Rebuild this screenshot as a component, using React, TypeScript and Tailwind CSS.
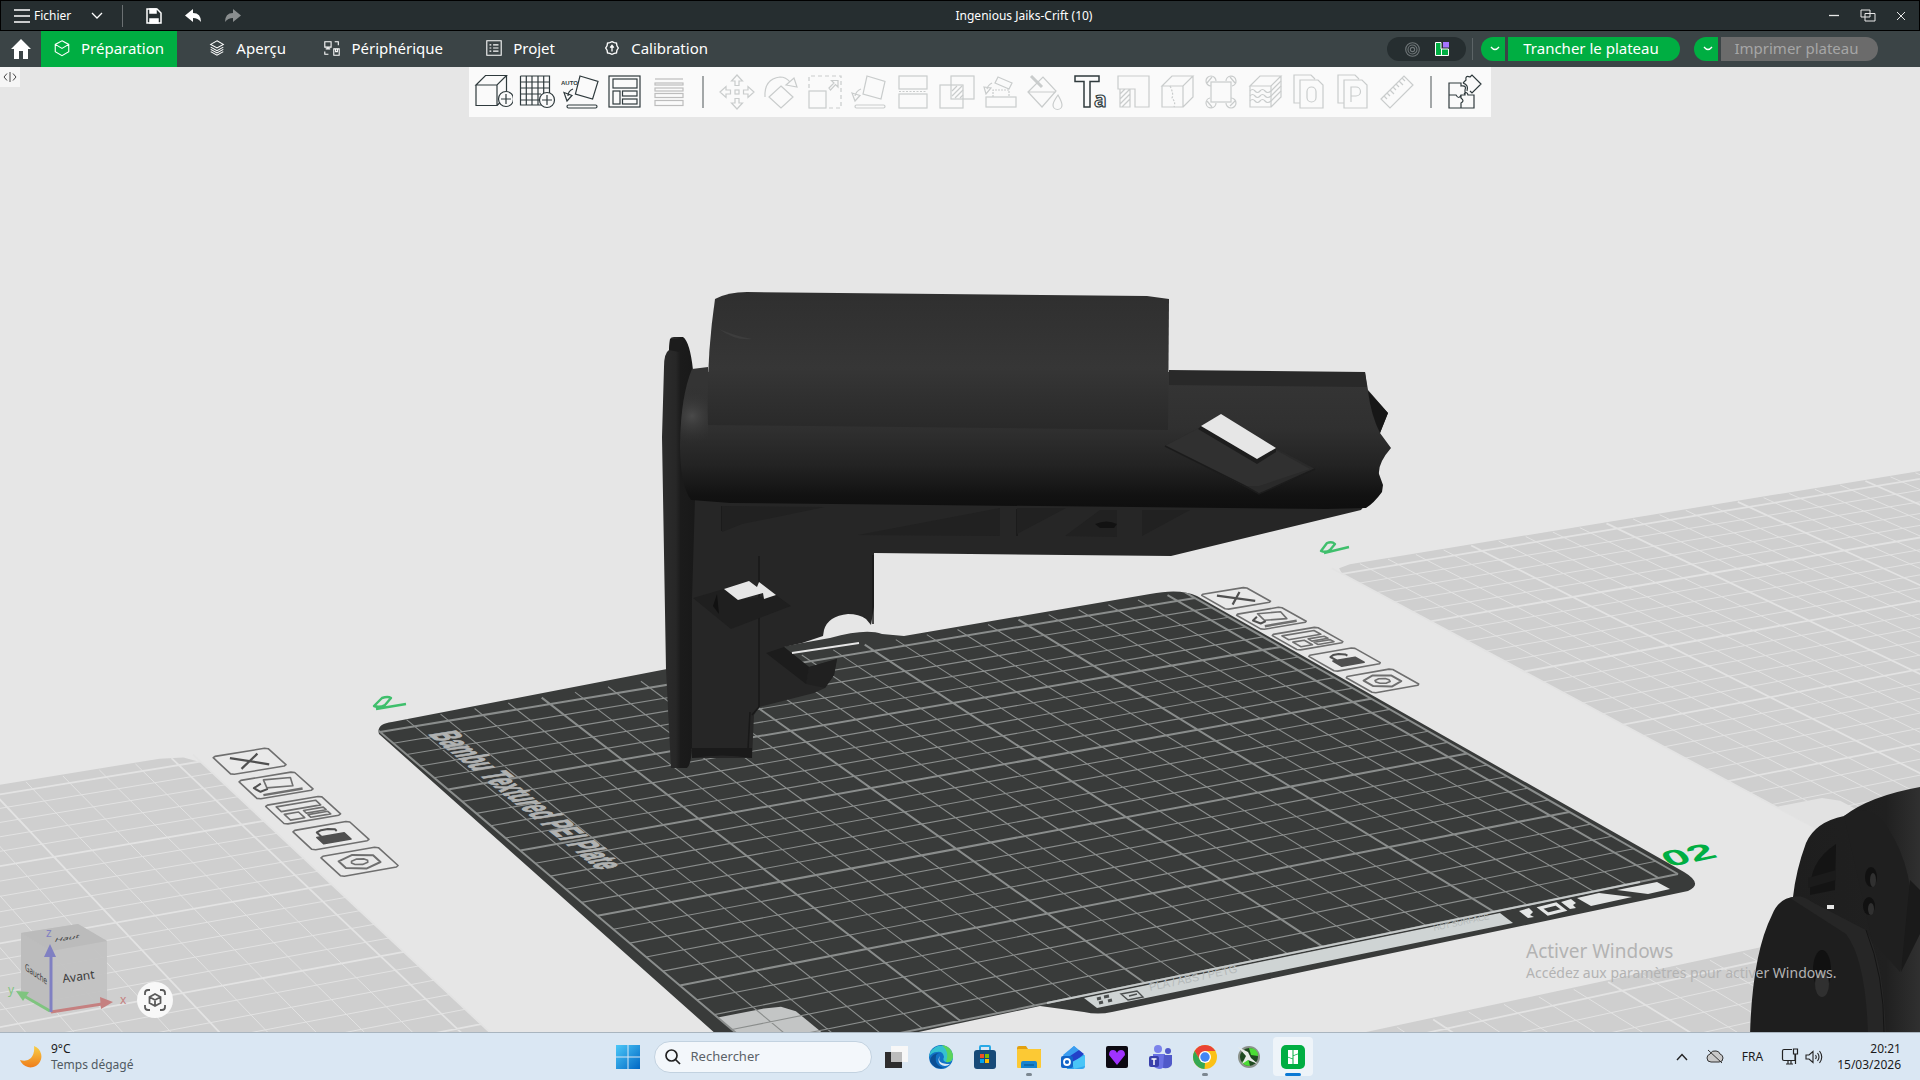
import React from "react";

type Pt = [number, number];

/* Projection of the build plane (millimetres) onto the viewport. */
function project(x: number, y: number): Pt {
  const u = x / 256;
  const v = y / 250;
  const w = 1 + 0.10236 * u + 0.17723 * v;
  return [(768 + 1081.8 * u - 320.7 * v) / w, (1060 - 96.5 * u - 198.3 * v) / w];
}
const pt = (p: Pt) => p[0].toFixed(1) + "," + p[1].toFixed(1);
const poly = (pts: Pt[]) => pts.map((p) => pt(project(p[0], p[1]))).join(" ");

function gridPath(x0: number, y0: number, bold: boolean) {
  let d = "";
  for (let i = 0; i <= 25; i++) {
    if ((i % 5 === 0) !== bold) continue;
    d += "M" + pt(project(x0 + i * 10, y0)) + "L" + pt(project(x0 + i * 10, y0 + 256));
    d += "M" + pt(project(x0, y0 + i * 10)) + "L" + pt(project(x0 + 256, y0 + i * 10));
  }
  if (bold) d += "M" + pt(project(x0 + 256, y0)) + "L" + pt(project(x0 + 256, y0 + 256));
  return d;
}

function GhostPlate({ x, y }: { x: number; y: number }) {
  return (
    <g>
      <polygon points={poly([[x, y], [x + 256, y], [x + 256, y + 249], [x + 253, y + 255], [x + 247, y + 257], [x + 7, y + 257], [x + 2, y + 255], [x, y + 250]])} fill="#cfcfcf" />
      <path d={gridPath(x, y, false)} stroke="#e2e2e2" strokeWidth="1" fill="none" />
      <path d={gridPath(x, y, true)} stroke="#e3e3e3" strokeWidth="1.8" fill="none" />
      <polygon points={poly([[x, y], [x + 18, y], [x + 18, y + 24], [x + 15, y + 28], [x, y + 28]])} fill="#e2e2e2" />
    </g>
  );
}

function PlateButtons({ x }: { x: number }) {
  const s = 15.5;
  const at = (i: number, pts: Pt[]) => poly(pts.map((p) => [x + (p[0] * s) / 10, 252 - i * 20.7 - (p[1] * s) / 10] as Pt));
  return (
    <g stroke="#6f6f6f" strokeWidth="1.6" fill="none" strokeLinejoin="round">
      {[0, 1, 2, 3, 4].map((i) => (
        <polygon key={i} points={at(i, [[0.5, 0], [9.5, 0], [10, 0.5], [10, 9.5], [9.5, 10], [0.5, 10], [0, 9.5], [0, 0.5]])} fill="#e9e9e9" />
      ))}
      <polyline points={at(0, [[2.5, 2], [7.5, 8]])} stroke="#505050" strokeWidth="2.2" />
      <polyline points={at(0, [[7.5, 2], [2.5, 8]])} stroke="#505050" strokeWidth="2.2" />
      <polygon points={at(1, [[4, 1.5], [8.5, 2.5], [7.5, 6.5], [3.2, 5.5]])} />
      <polyline points={at(1, [[3, 3], [1.2, 4.6], [1.6, 6.8], [3.2, 6]])} stroke="#505050" strokeWidth="2" />
      <polyline points={at(1, [[1.5, 8.5], [8.5, 8.5]])} strokeWidth="2.4" />
      <polygon points={at(2, [[1.5, 1.5], [8.5, 1.5], [8.5, 4], [1.5, 4]])} />
      <polygon points={at(2, [[1.5, 5.5], [4, 5.5], [4, 8.5], [1.5, 8.5]])} />
      <polygon points={at(2, [[5, 5.2], [8.5, 5.2], [8.5, 6.6], [5, 6.6]])} />
      <polygon points={at(2, [[5, 7.4], [8.5, 7.4], [8.5, 8.8], [5, 8.8]])} />
      <polygon points={at(3, [[2.6, 4.8], [7.4, 4.8], [7.4, 8], [2.6, 8]])} fill="#505050" stroke="#505050" />
      <polyline points={at(3, [[3.4, 4.8], [3.4, 2.6], [4.4, 1.9], [5.6, 1.9], [6.6, 2.6], [6.6, 3.4]])} stroke="#505050" strokeWidth="2" />
      <polygon points={at(4, [[5, 1.6], [8, 3.3], [8, 6.7], [5, 8.4], [2, 6.7], [2, 3.3]])} strokeWidth="2" />
      <polygon points={at(4, [[5, 3.7], [6.1, 4.2], [6.4, 5], [6.1, 5.9], [5, 6.4], [3.9, 5.9], [3.6, 5], [3.9, 4.2]])} strokeWidth="1.6" />
    </g>
  );
}

const plateOutline = "M379 734 Q376 724 392 722 L802 643 L830 638 Q866 628 882 634 L904 636 L1150 594 Q1180 588 1197 596 L1684 872 Q1704 884 1688 891 L1112 1012 Q1098 1015 1084 1012 L1040 1006 L900 1036 L860 1100 H790 Z";

function Scene() {
  return (
    <svg className="absolute inset-0 h-full w-full" viewBox="0 67 1920 965" preserveAspectRatio="xMidYMid slice" role="img" aria-label="Vue 3D du plateau">
      <defs>
        <clipPath id="plate"><path d={plateOutline} /></clipPath>
        <linearGradient id="top" x1="0" y1="292" x2="0" y2="430" gradientUnits="userSpaceOnUse">
          <stop offset="0" stopColor="#2f2f2f" /><stop offset="0.55" stopColor="#363636" /><stop offset="0.75" stopColor="#303030" /><stop offset="1" stopColor="#292929" />
        </linearGradient>
        <linearGradient id="tube" x1="0" y1="385" x2="0" y2="508" gradientUnits="userSpaceOnUse">
          <stop offset="0" stopColor="#343434" /><stop offset="0.35" stopColor="#303030" /><stop offset="0.65" stopColor="#232323" /><stop offset="0.9" stopColor="#121212" /><stop offset="1" stopColor="#0f0f0f" />
        </linearGradient>
        <radialGradient id="shine" cx="692" cy="416" r="28" gradientUnits="userSpaceOnUse">
          <stop offset="0" stopColor="#4a4a4a" /><stop offset="1" stopColor="#303030" stopOpacity="0" />
        </radialGradient>
        <linearGradient id="butt" x1="662" y1="0" x2="693" y2="0" gradientUnits="userSpaceOnUse">
          <stop offset="0" stopColor="#2c2c2c" /><stop offset="0.45" stopColor="#272727" /><stop offset="0.6" stopColor="#1b1b1b" /><stop offset="1" stopColor="#191919" />
        </linearGradient>
        <linearGradient id="right" x1="1750" y1="0" x2="1920" y2="0" gradientUnits="userSpaceOnUse">
          <stop offset="0" stopColor="#1d1d1d" /><stop offset="0.8" stopColor="#202020" /><stop offset="1" stopColor="#303030" />
        </linearGradient>
      </defs>
      <rect x="-400" y="-400" width="2800" height="1900" fill="#e6e6e6" />
      <GhostPlate x={-307} y={0} />
      <GhostPlate x={307} y={0} />
      <GhostPlate x={0} y={-307} />
      <GhostPlate x={307} y={-307} />

      {/* active plate */}
      <path d={plateOutline} fill="#393b3a" />
      <g clipPath="url(#plate)">
        <polygon points={poly([[0, 0], [18, 0], [18, 23], [16, 27], [12, 28], [0, 28]])} fill="#c3c5c5" />
        <path d={gridPath(0, 0, false)} stroke="#8a8d8c" strokeWidth="1.1" fill="none" />
        <path d={gridPath(0, 0, true)} stroke="#8a8d8c" strokeWidth="2" fill="none" />
      </g>
      <path d="M1047 1003 L1640 882" stroke="#c5c9c9" strokeWidth="2" />
      <path d="M1084 998 L1500 913 L1513 923 L1097 1008 Z" fill="#cfd4d4" />
      <g fill="none" stroke="#4b4e4e" strokeWidth="2">
        <path d="M1097 999 l4 -1 M1104 997 l5 -1 M1099 1003 l4 -1 M1108 1001 l4 -1" strokeWidth="3" />
        <path d="M1121 994 l16 -3 l6 6 l-15 3 z M1129 996 l8 -2" strokeWidth="1.4" />
      </g>
      <g fill="#b4b9b9" fontFamily="Liberation Sans, sans-serif">
        <text transform="translate(1150 991) rotate(-12)" fontSize="11">PLA / ABS / PETG</text>
        <text transform="translate(1434 931) rotate(-12)" fontSize="8">HOT SURFACE</text>
      </g>
      <g fill="#e4e6e6">
        <path d="M1519 911 l10 -3 l4 4 l-3 3 l4 2 l-6 1 z M1561 902 l10 -3 l5 4 l-3 2 l3 3 l-6 1 z" />
        <path d="M1540 908 L1556 904 L1564 910 L1548 914 Z" fill="none" stroke="#e4e6e6" strokeWidth="3" />
        <path d="M1577 898 L1599 893 L1632 897 L1591 906 Z M1617 890 L1657 882 L1670 889 L1648 894 Z" />
      </g>
      <text transform="matrix(1.38 1.1 -3.9 0.6 428 734)" fontFamily="Liberation Sans, sans-serif" fontSize="10" fontWeight="700" fill="#b0b2b2" stroke="#b0b2b2" strokeWidth="0.4">Bambu Textured PEI Plate</text>
      <PlateButtons x={259} />
      <PlateButtons x={-47} />
      <text transform="matrix(1.5 -0.3 0.55 0.68 1669 867)" fontFamily="Liberation Sans, sans-serif" fontSize="30" fontWeight="700" fill="#00ae42">02</text>
      <g fill="none" stroke="#3fbf6c" strokeWidth="2.4" strokeLinejoin="round">
        <path d="M376 709 L406 704 M374 706 L382 698 Q388 696 391 698 L385 705 Q380 708 374 706 Z" />
        <path d="M1324 553 L1349 547 M1321 551 L1327 543 Q1332 541 1335 544 L1330 550 Q1326 553 1321 551 Z" />
      </g>

      {/* stock model */}
      <path d="M691 495 L1365 505 L1361 510 L1171 556 L874 553 L874 607 L871 625 L866 619 Q859 614 848 614 Q828 616 824 630 L823 636 L802 643 L784 647 L809 667 L837 659 L834 675 L825 688 L814 693 L759 707 L754 715 L752 758 L692 758 Z" fill="#262626" />
      <path d="M809 667 L837 659 L834 675 L825 688 L806 684 Z" fill="#202020" />
      <path d="M766 653 L784 647 L809 667 L806 684 Z" fill="#1c1c1c" />
      <path d="M792 653 L859 643" stroke="#e6e6e6" strokeWidth="2" />
      <path d="M759 556 V707 L752 715 M692 749 H748 L750 712 M873 555 V624 M722 506 V531 M1017 509 V536" stroke="#191919" strokeWidth="1.5" fill="none" />
      <path d="M722 506 L825 507 L742 524 L722 532 Z M858 535 L1000 508 V536 Z M1017 508 H1066 L1017 534 Z M1065 536 L1100 510 H1117 V537 Z M1142 510 H1190 L1142 536 Z" fill="#212121" />
      <path d="M1095 524 q12 -5 22 0 l-3 4 h-14 z" fill="#121212" />
      <path d="M693 598 L724 589 L738 600 L776 595 L791 606 L731 629 Z" fill="#1f1f1f" />
      <path d="M724 589 L749 581 L757 587 L759 582 L776 595 L764 599 L763 593 L738 600 Z" fill="#e6e6e6" />
      <path d="M717 594 l2 20 l-6 -8 z" fill="#111" />
      <path d="M692 748 H752 V758 Q722 753 692 758 Z" fill="#1a1a1a" />
      <path d="M669 349 L670 339 Q671 337 674 337 H683 Q690 342 693 370 L695 500 L692 600 L692 748 Q691 765 687 768 L671 768 L666 670 L662 437 L664 367 Q664 353 669 350 Z" fill="url(#butt)" />
      <path d="M670 339 H684 L679 352 L669 350 Z" fill="#1c1c1c" />
      <path d="M692 369 L708 367 V372 L1365 372 L1368 390 L1388 413 L1380 433 L1391 448 Q1378 463 1379 474 L1383 485 L1382 492 Q1374 503 1366 508 L1327 509 L730 503 L691 500 Q680 485 680 445 Q681 395 692 369 Z" fill="url(#tube)" />
      <path d="M1169 370 L1365 372 L1367 387 L1169 385 Z" fill="#292929" />
      <path d="M1368 391 L1388 413 L1380 433 Q1371 415 1368 391 Z" fill="#171717" />
      <path d="M692 369 L708 367 V444 H680 Q681 395 692 369 Z" fill="url(#shine)" />
      <path d="M715 299 Q728 292 747 292 L1147 296 L1169 299 L1168 430 L708 425 Q706 360 715 299 Z" fill="url(#top)" />
      <path d="M719 329 Q735 341 752 339 Q735 336 719 329 Z" fill="#3d3d3d" />
      <path d="M1165 446 L1201 427 L1276 448 L1315 469 L1259 494 Z" fill="#2a2a2a" />
      <path d="M1165 446 L1201 427 L1257 461 L1276 450 L1310 469 L1259 486 L1245 486 Z" fill="#303030" />
      <path d="M1165 446 L1245 486 L1259 494 L1315 469" fill="none" stroke="#1c1c1c" strokeWidth="1.5" />
      <path d="M1201 426 L1257 459 L1276 448 L1276 452 L1257 464 L1198 429 Z" fill="#1d1d1d" />
      <path d="M1221 414 L1276 448 L1257 459 L1201 426 Z" fill="#e6e6e6" />

      {/* neighbouring model */}
      <path d="M1920 787 Q1870 796 1844 816 Q1815 822 1806 843 Q1796 870 1793 897 L1800 1040 H1920 Z" fill="url(#right)" />
      <path d="M1844 816 Q1872 800 1889 830 Q1915 870 1912 930 L1900 972 L1872 940 Z" fill="#1f1f1f" />
      <path d="M1910 880 L1920 890 V934 L1901 972 Z" fill="#1a1a1a" />
      <path d="M1836 844 Q1808 862 1810 895 L1835 890 Z" fill="#141414" />
      <path d="M1808 878 l28 -8 v10 l-28 8 z" fill="#1b1b1b" />
      <path d="M1750 1036 Q1752 955 1772 915 Q1780 895 1800 897 L1866 930 Q1884 960 1886 1036 Z" fill="#1e1e1e" />
      <path d="M1790 898 Q1800 893 1812 902 L1866 930 Q1884 960 1886 1036 H1868 Q1866 960 1846 934 Z" fill="#262626" />
      <rect x="1827" y="905" width="7" height="4" fill="#e6e6e6" />
      <g fill="#111">
        <ellipse cx="1871" cy="877" rx="6" ry="10" /><ellipse cx="1869" cy="906" rx="6" ry="9" /><ellipse cx="1822" cy="970" rx="9" ry="20" />
      </g>
      <g fill="#303030">
        <ellipse cx="1873" cy="880" rx="3" ry="7" /><ellipse cx="1871" cy="909" rx="3" ry="6" /><ellipse cx="1822" cy="984" rx="7" ry="13" />
      </g>
      <path d="M1866 930 Q1884 975 1884 1032" stroke="#151515" fill="none" />

      {/* orientation cube */}
      <path d="M21 933 L78 924 L107 941 L107 1003 L51 1013 L21 992 Z" fill="#c2c2c2" fillOpacity="0.95" />
      <path d="M21 933 L51 951 V1013 L21 992 Z" fill="#bdbdbd" />
      <path d="M21 933 L78 924 L107 941 L51 951 Z" fill="#bbb" />
      <g fontFamily="Noto Sans, sans-serif" fill="#3c3c3c">
        <text transform="translate(63 983) rotate(-8)" fontSize="12">Avant</text>
        <text transform="matrix(0.62 0.42 0 1 25 970)" fontSize="10">Gauche</text>
        <text transform="matrix(1.2 -0.2 -0.3 0.6 54 942)" fontSize="9">Haut</text>
      </g>
      <g strokeWidth="3" fill="none">
        <path d="M51 1012 L102 1004" stroke="#c58080" />
        <path d="M50 1011 L24 996" stroke="#7fc47f" />
        <path d="M51 1012 V955" stroke="#8080c2" />
      </g>
      <path d="M100 997 L113 1002 L101 1009 Z" fill="#c58080" />
      <path d="M16 991 L29 992 L23 1001 Z" fill="#7fc47f" />
      <path d="M50 944 L56 957 H44 Z" fill="#8080c2" />
      <g fontFamily="Noto Sans, sans-serif" fontSize="12">
        <text x="46" y="937" fill="#8080c2">z</text><text x="8" y="994" fill="#7fc47f">y</text><text x="120" y="1004" fill="#c58080">x</text>
      </g>
    </svg>
  );
}

/* ---------- toolbar ---------- */
const tools: { name: string; dark?: boolean; art: React.ReactNode }[] = [
  { name: "Ajouter", dark: true, art: <><path d="M1 11 L10.500 1.500 H31.500 L22 11 Z M1 11 V31.500 H22 V11 M31.500 1.500 V17 M22 31.500 L25 28.500" /><circle cx="31" cy="25" r="7.500" /><path d="M31 20 V30 M26 25 H36" /></> },
  { name: "Ajouter un plateau", dark: true, art: <><path d="M1.500 2 H30.500 V19 M1.500 2 V31 H22 M7.300 2 V31 M13 2 V31 M19 2 V31 M24.700 2 V19 M1.500 8 H30.500 M1.500 14 H30.500 M1.500 20 H22 M1.500 26 H21" /><circle cx="28" cy="26" r="7.500" /><path d="M28 21 V31 M23 26 H33" /></> },
  { name: "Orientation automatique", dark: true, art: <><text x="-2" y="11" fontSize="6" fontWeight="700" fontFamily="Liberation Sans, sans-serif" fill="currentColor" stroke="none">AUTO</text><path d="M17 2 L35 7.500 L29.600 25 L12.400 20 Z M10 15 Q5 17 5 22 M1 18.500 L9 21.500 L4 27 Z" /><rect x="4" y="31" width="30" height="3" rx="1.500" /></> },
  { name: "Agencer", dark: true, art: <><rect x="2" y="2" width="31" height="31" /><rect x="6" y="5" width="24" height="9" /><rect x="6" y="17" width="7" height="13" /><rect x="15.500" y="17" width="14.500" height="5" /><rect x="15.500" y="25" width="14.500" height="5" /></> },
  { name: "Hauteur variable", art: <g stroke="#bdbdbd"><path d="M4 5 H32" /><rect x="4" y="9" width="28" height="2" /><rect x="4" y="14" width="28" height="3" /><rect x="4" y="19.500" width="28" height="4" /><rect x="4" y="26.500" width="28" height="5" /></g> },
  { name: "Déplacer", art: <>{[0, 90, 180, 270].map((a) => <path key={a} d="M18 1 L23.500 7 H20 V11.500 H16 V7 H12.500 Z" transform={`rotate(${a} 18 18)`} />)}<rect x="16" y="16" width="4" height="4" /></> },
  { name: "Pivoter", art: <><path d="M18 12 L30 23 L18 34 L6 23 Z M2 23 Q1 5 17 3 Q23 3 27 8 M23 11 L31 4 L34 13 Z" /></> },
  { name: "Échelle", art: <><rect x="2" y="17" width="17" height="17" /><path d="M2 14 V2 H34 V34 H21" strokeDasharray="4 3" /><path d="M22 14 L27 9 L24.500 6.500 H31 V13 L28.500 10.500 L23.500 16 Z" /></> },
  { name: "Poser à plat", art: <><path d="M16 2 L34 7.500 L30 25 L12 20 Z M10 15 Q5 17 4 22 M1 19 L9 21.500 L4 27 Z" /><rect x="4" y="31" width="30" height="3" rx="1.500" /></> },
  { name: "Couper", art: <><rect x="4" y="2" width="28" height="13" /><rect x="4" y="20" width="28" height="14" /><path d="M4 17.500 H32" strokeDasharray="2 1.500" /></> },
  { name: "Opération booléenne", art: <><rect x="1" y="11" width="23" height="23" /><rect x="12" y="2" width="23" height="23" /><path d="M13 17 L18 12 M13 22 L23 12 M16 24 L24 16 M21 24 L24 21" /></> },
  { name: "Support", art: <><rect x="3" y="23" width="30" height="10" /><path d="M15 3 L29 9 L26 15 L12 9 Z M1 13 L8 14 L3 20 Z M4 15 Q5 11 9 9" /><path d="M10 23 V16 H26 V23" strokeDasharray="2 1" /></> },
  { name: "Peinture", art: <><path d="M1 18 L16 3 L29 17 L15 33 Z M1 18 H29 M31 21 Q26 28 26 31 A4.500 4.500 0 0 0 35 31 Q35 28 31 21 Z" /><path d="M4 2 L15 13" strokeWidth="3" /></> },
  { name: "Texte", dark: true, art: <><path d="M4 2 H28 V7.500 H19 V33 H13 V7.500 H4 Z" strokeWidth="1.500" /><text x="23" y="33" fontSize="21" fontWeight="700" fontFamily="Noto Sans, sans-serif" fill="none">a</text></> },
  { name: "Support arborescent", art: <><path d="M3 2 H34 V33 H20 V15 H3 Z M5 15 V33 H15 V15 M5 20 L10 15 M5 25 L15 15 M5 30 L15 20 M7 33 L15 25" /></> },
  { name: "Couture", art: <><path d="M3 12 L13 2 H34 L24 12 Z M3 12 V33 H24 V12 M34 2 V23 L24 33" /><path d="M11 12 Q15 20 13 24 Q17 28 15 33" strokeDasharray="2 1.500" /></> },
  { name: "Surface floue", art: <><rect x="8" y="8" width="20" height="20" /><path d="M8 12 A5 5 0 1 1 13 7 M23 7 A5 5 0 1 1 29 12 M28 24 A5 5 0 1 1 23 29 M13 29 A5 5 0 1 1 7 24 M4 9 L9 3 M27 3 L32 9 M27 32 L32 27 M4 27 L9 33" /></> },
  { name: "Texture", art: <><path d="M3 12 L13 2 H34 L24 12 Z M3 12 V33 H24 V12 M34 2 V23 L24 33" /><path d="M3 17 q2.500 -3 5 0 t5 0 t5 0 t6 0 L34 7 M3 22 q2.500 -3 5 0 t5 0 t5 0 t6 0 L34 12 M3 27 q2.500 -3 5 0 t5 0 t5 0 t6 0 L34 17" /></> },
  { name: "Objet", art: <><path d="M9 29 H3 V1 H20 L24 5 M9 6 H27 L32 11 V34 H9 Z" /><rect x="16" y="13" width="9" height="15" rx="4.500" /></> },
  { name: "Pièce", art: <><path d="M9 29 H3 V1 H20 L24 5 M9 6 H27 L32 11 V34 H9 Z" /><path d="M16 28 V13 H21 A4 4 0 0 1 21 22 H16" /></> },
  { name: "Mesurer", art: <><path d="M2 25 L25 2 L34 11 L11 34 Z M5 22 L8 25 M8 19 L11 22 M11 16 L15 20 M14 13 L17 16 M17 10 L20 13 M20 7 L24 11 M23 4 L26 7" /></> },
  { name: "Assemblage", dark: true, art: <><path d="M2 9 H14 V12 Q20 11 18 16 V21 H14 Q12 26 9 21 H2 Z M2 21 V34 H27 V21 H21 Q20 17 17 20 M14 21 V24 Q18 27 14 29 V34 M16 9 L19 6 Q18 1 23 3 L25 1 L34 10 L25 19 L23 17 M16 9 Q22 11 20 17" /></> },
];

function Tool({ t }: { t: (typeof tools)[number] }) {
  return (
    <button type="button" aria-label={t.name} className={"flex h-[50px] w-11 items-center justify-center " + (t.dark ? "text-[#2f3a3d]" : "text-[#c9cccc]")}>
      <svg width="40" height="40" viewBox="-2 -2 40 40" fill="none" stroke="currentColor" strokeWidth="1.2">{t.art}</svg>
    </button>
  );
}

function Icon({ size = 20, children, sw = 1.2 }: { size?: number; children: React.ReactNode; sw?: number }) {
  return <svg width={size} height={size} viewBox="0 0 20 20" fill="none" stroke="currentColor" strokeWidth={sw} className="shrink-0">{children}</svg>;
}

const tabs: { label: string; cls: string; icon: React.ReactNode }[] = [
  { label: "Préparation", cls: "w-[136px] bg-[#00ae42]", icon: <path d="M10 2 L17.500 6 V14 L10 18.500 L2.500 14 V6 Z M2.500 6 L10 10.500 L17.500 6" /> },
  { label: "Aperçu", cls: "w-[122px]", icon: <path d="M10 2 L17 6 L10 10 L3 6 Z M3 9 L10 13 L17 9 M3 11.500 L10 15.500 L17 11.500 M3 14 L10 18 L17 14" /> },
  { label: "Périphérique", cls: "w-[157px]", icon: <path d="M2 3 H9 V9 H2 Z M5.500 9 V11 M3 11 H8 M13 3 H17 V7 M2 14 V17 H6 M12 11 H18 V18 H12 Z M14 11 V14 H16 V11" /> },
  { label: "Projet", cls: "w-[112px]", icon: <path d="M2 2 H18 V18 H2 Z M5 6.500 H7 M9 6.500 H15 M5 10 H7 M9 10 H15 M5 13.500 H7 M9 13.500 H15" /> },
  { label: "Calibration", cls: "w-[153px]", icon: <path d="M10 3 L12.500 4 L15 4.500 L15.500 7.500 L17 10 L15.500 12.500 L15 15.500 L12.500 16 L10 17 L7.500 16 L5 15.500 L4.500 12.500 L3 10 L4.500 7.500 L5 4.500 L7.500 4 Z M10 14 V7 M8 9.500 L10 7 L12 9.500" strokeWidth="1.500" /> },
];

function Split({ label, off }: { label: string; off?: boolean }) {
  return (
    <div className="flex h-6 gap-[3px]">
      <button type="button" aria-label={"Options : " + label} className="flex w-6 items-center justify-center rounded-l-full bg-[#00ae42] text-white">
        <svg width="10" height="6" viewBox="0 0 10 6" fill="none" stroke="currentColor" strokeWidth="1.3" className="ml-1"><path d="M1 1 Q5 6 9 1" /></svg>
      </button>
      <button type="button" className={"rounded-r-full pb-px pr-1.5 text-center text-[15px] leading-[23px] " + (off ? "w-[157px] bg-[#6b6b6b] text-[#a6a6a6]" : "w-[172px] bg-[#00ae42] text-white")}>
        {label}
      </button>
    </div>
  );
}

const apps: { name: string; art: React.ReactNode; dot?: boolean; active?: boolean }[] = [
  { name: "Vue des tâches", art: <><rect x="1" y="8" width="17" height="16" fill="#2d2d2d" /><rect x="7" y="2" width="17" height="16" fill="#f7f7f7" /><rect x="7" y="8" width="11" height="10" fill="#bcbcbc" /></> },
  { name: "Edge", art: <><circle cx="13" cy="13" r="12" fill="#1272c6" /><path d="M2 9 A12 12 0 0 1 25 13 Q25 19 18 18 Q14 17 16 13 Q15 7 9 8 Q4 8 1 13 Z" fill="#35c1d0" /><path d="M14 1 A12 12 0 0 1 25 13 Q24 19 18 18 Q22 8 14 1 Z" fill="#5bd45c" /><path d="M8 12 Q6 22 17 24 Q6 26 2 17 Q3 9 12 9 Q8 10 8 12 Z" fill="#0c4f94" /><path d="M12 12 Q8 20 22 20 Q17 24 12 20 Q9 16 12 12 Z" fill="#dbe8f3" /></> },
  { name: "Microsoft Store", art: <><path d="M8 7 V3 Q8 2 9 2 H17 Q18 2 18 3 V7" fill="none" stroke="#29a9e6" strokeWidth="2" /><rect x="2" y="6" width="22" height="19" rx="3" fill="#174a78" /><rect x="8" y="10" width="4" height="4" fill="#f25022" /><rect x="13" y="10" width="4" height="4" fill="#7fba00" /><rect x="8" y="15" width="4" height="4" fill="#00a4ef" /><rect x="13" y="15" width="4" height="4" fill="#ffb900" /></> },
  { name: "Explorateur de fichiers", dot: true, art: <><path d="M1 4 Q1 2 3 2 H10 L12 5 H25 V12 H1 Z" fill="#e3a10f" /><rect x="1" y="5" width="24" height="19" rx="1" fill="#fcc934" /><path d="M5 24 V19 Q5 17 7 17 H19 Q21 17 21 19 V24 Z" fill="#1683cf" /><path d="M8 21 H18" stroke="#0c5f9d" strokeWidth="1.500" /></> },
  { name: "Outlook", art: <><path d="M3 12 L14 2 L25 12 V22 Q25 25 22 25 H7 Z" fill="#2fa6ee" /><path d="M3 11 L14 2 L19 6 L8 16 Z" fill="#3b9df0" /><path d="M7 14 L19 6 L24 10 L12 20 Z" fill="#2340c8" /><path d="M12 18 L25 11 V22 L14 25 Z" fill="#49c5f7" /><rect x="1" y="12" width="12" height="12" rx="2" fill="#1064c8" /><circle cx="7" cy="18" r="3" fill="none" stroke="#fff" strokeWidth="1.800" /></> },
  { name: "Cœur", art: <><rect x="2" y="2" width="22" height="22" rx="2" fill="#0c0a12" /><path d="M13 21 L5 11 Q5 6 9 6 Q12 6 13 9 Q14 6 17 6 Q21 6 21 11 Z" fill="#a033ff" /></> },
  { name: "Teams", art: <><circle cx="10" cy="5" r="4" fill="#7b83eb" /><circle cx="20" cy="7" r="3" fill="#5059c9" /><path d="M5 10 H17 V20 Q16 25 11 25 Q5 24 5 20 Z" fill="#6a72e4" /><path d="M16 11 H24 V20 Q23 25 15 24 Z" fill="#5059c9" /><rect x="1" y="12" width="10" height="11" rx="2" fill="#3940ab" /><path d="M3.500 15 H8.500 M6 15 V21" stroke="#fff" strokeWidth="1.500" /></> },
  { name: "Chrome", dot: true, art: <><circle cx="13" cy="13" r="12" fill="#fbc116" /><path d="M23.400 7 A12 12 0 0 0 2.600 7 L8 16 L13 7 Z" fill="#ea4335" /><path d="M2.600 7 L8 16 L13 19 L12.500 25 A12 12 0 0 1 2.600 7 Z" fill="#34a853" /><circle cx="13" cy="13" r="6" fill="#fff" /><circle cx="13" cy="13" r="4.700" fill="#4285f4" /></> },
  { name: "Jeu", art: <><circle cx="13" cy="13" r="11" fill="#8b928b" /><circle cx="13" cy="13" r="9" fill="#1f4a20" /><path d="M13 4 Q22 4 22 12 L15 11 Z M6 18 L12 14 L14 22 Q8 22 6 18 Z" fill="#4bdc35" /><path d="M2 3 L12 8 L15 14 L22 20 L12 16 L6 20 L10 12 Z" fill="#e8ece8" /></> },
  { name: "Bambu Studio", active: true, art: <><rect x="1" y="1" width="24" height="24" rx="5" fill="#00ae42" /><path d="M8 6 H12.500 V14.500 L8 12.800 Z M8 13.600 L12.500 15.300 V20 H8 Z M13.500 6 H18 V9.500 L13.500 11.200 Z M13.500 12 L18 10.300 V20 H13.500 Z" fill="#fff" /></> },
];

export default function App() {
  return (
    <div className="flex h-screen flex-col overflow-hidden bg-[#e6e6e6] font-['Noto_Sans','Open_Sans',sans-serif]">
      <header>
        <div className="grid h-[31px] grid-cols-3 items-center border border-black bg-[#262e30] text-xs text-white">
          <div className="flex items-center pl-[13px]">
            <button type="button" className="flex items-center gap-1">
              <svg width="16" height="14" viewBox="0 0 16 14" stroke="#fff" strokeWidth="1.3"><path d="M0 1 H16 M0 7 H16 M0 13 H16" /></svg>
              Fichier
            </button>
            <button type="button" aria-label="Plus" className="ml-5"><svg width="12" height="7" viewBox="0 0 12 7" fill="none" stroke="#fff" strokeWidth="1.3"><path d="M1 1 L6 6 L11 1" /></svg></button>
            <span className="ml-[19px] h-[22px] w-px bg-[#6b7072]" />
            <button type="button" aria-label="Enregistrer" className="ml-[22px]"><svg width="18" height="16" viewBox="0 0 18 16" fill="none" stroke="#fff" strokeWidth="1.5"><path d="M2 1 H12 L16 5 V15 H2 Z" /><path d="M5 1 V5 H11 V1 Z M5 15 V11 H13 V15 Z" fill="#fff" /></svg></button>
            <button type="button" aria-label="Annuler" className="ml-[22px]"><svg width="18" height="14" viewBox="0 0 18 14" fill="#fff"><path d="M8 0 V4 Q16 4 16 13 Q13 9 8 9 V13 L0 6.500 Z" /></svg></button>
            <button type="button" aria-label="Rétablir" className="ml-[21px]"><svg width="18" height="14" viewBox="0 0 18 14" fill="#8a8e8f"><path d="M9 0 V4 Q1 4 1 13 Q4 9 9 9 V13 L17 6.500 Z" /></svg></button>
          </div>
          <h1 className="pl-32 text-center">Ingenious Jaiks-Crift (10)</h1>
          <div className="flex items-center justify-end gap-5 pr-[13px] text-[#e8e8e8]">
            <button type="button" aria-label="Réduire"><svg width="12" height="12" viewBox="0 0 12 12" stroke="currentColor"><path d="M1 5.500 H11" strokeWidth="1.300" /></svg></button>
            <button type="button" aria-label="Restaurer"><svg width="16" height="13" viewBox="0 0 16 13" fill="none" stroke="currentColor"><path d="M1 1 H10 V8 H1 Z M5 4.500 H15 V12 H5 Z" /></svg></button>
            <button type="button" aria-label="Fermer"><svg width="10" height="10" viewBox="0 0 10 10" stroke="currentColor"><path d="M1 1 L9 9 M9 1 L1 9" /></svg></button>
          </div>
        </div>
        <div className="flex h-9 items-center justify-between bg-[#3b4446] pr-[42px] text-white">
          <nav className="flex h-full items-center">
            <a href="#accueil" aria-label="Accueil" className="flex w-[41px] justify-center"><svg width="20" height="20" viewBox="0 0 20 20" fill="#fff"><path d="M10 0 L20 10 H17 V20 H12 V12 H8 V20 H3 V10 H0 Z" /></svg></a>
            {tabs.map((t) => (
              <button type="button" key={t.label} className={"flex h-full items-center justify-end gap-2.5 pb-0.5 pr-[13px] text-[15px] " + t.cls}>
                <Icon size={18}>{t.icon}</Icon>{t.label}
              </button>
            ))}
          </nav>
          <div className="flex items-center">
            <div className="flex h-6 w-[79px] items-center justify-around rounded-full bg-[#262e30] px-2.5">
              <button type="button" aria-label="Bobine" className="text-[#6f7678]"><Icon size={17} sw={1.3}><circle cx="10" cy="10" r="8" /><circle cx="10" cy="10" r="5.300" /><circle cx="10" cy="10" r="2.500" /></Icon></button>
              <button type="button" aria-label="Disposition"><svg width="16" height="16" viewBox="0 0 16 16"><path d="M1.500 1.500 H7 V8 H14.500 V14.500 H1.500 Z" fill="#00ae42" stroke="#fff" /><path d="M7.500 8 V14" stroke="#fff" /><rect x="9" y="1" width="6" height="5.500" fill="#a674ff" /></svg></button>
            </div>
            <span className="ml-1.5 mr-2 h-[22px] w-px bg-[#5c6466]" />
            <Split label="Trancher le plateau" />
            <div className="w-3.5" />
            <Split label="Imprimer plateau" off />
          </div>
        </div>
      </header>

      <main className="relative min-h-0 flex-1 overflow-hidden">
        <Scene />
        <div className="relative flex items-start">
          <button type="button" aria-label="Replier le panneau" className="flex h-5 w-5 items-center justify-center bg-[#f6f6f6]">
            <svg width="14" height="10" viewBox="0 0 14 10" fill="none" stroke="#444"><path d="M4 1.500 L1 5 L4 8.500 M7 0 V10 M10 1.500 L13 5 L10 8.500" /></svg>
          </button>
          <div className="flex flex-1 justify-center pl-5">
            <div role="toolbar" className="flex h-[50px] items-center bg-[#fafafa] pl-0.5 pr-1">
              {tools.slice(0, 5).map((t) => <Tool key={t.name} t={t} />)}
              <span className="mx-[11px] h-8 w-0.5 bg-[#a3a7a8]" />
              {tools.slice(5, 21).map((t) => <Tool key={t.name} t={t} />)}
              <span className="mx-[11px] h-8 w-0.5 bg-[#a3a7a8]" />
              <Tool t={tools[21]} />
            </div>
          </div>
        </div>
        <button type="button" aria-label="Recentrer la vue" className="absolute bottom-[14px] left-[137px] flex h-9 w-9 items-center justify-center rounded-full bg-[#f8f8f8]">
          <svg width="22" height="22" viewBox="0 0 22 22" fill="none" stroke="#5a5a5a" strokeWidth="1.800"><path d="M1 6 V4 Q1 1 4 1 H6 M16 1 H18 Q21 1 21 4 V6 M21 16 V18 Q21 21 18 21 H16 M6 21 H4 Q1 21 1 18 V16 M11 5 L16.500 8 V14 L11 17 L5.500 14 V8 Z M5.500 8 L11 11 L16.500 8 M11 11 V17" /></svg>
        </button>
        <div className="absolute bottom-[49px] right-20 w-[314px] whitespace-nowrap text-[#b3b3b3]">
          <p className="text-[19px] leading-6">Activer Windows</p>
          <p className="text-sm leading-5">Accédez aux paramètres pour activer Windows.</p>
        </div>
      </main>

      <footer className="grid h-12 grid-cols-[1fr_auto_1fr] items-center border-t border-[#a9b5bf] bg-[#dae7f3] text-[#1b1b1b]">
        <button type="button" className="flex items-center gap-2 pl-[19px] text-left text-xs leading-4">
          <svg width="24" height="24" viewBox="0 0 24 24"><defs><linearGradient id="moon" x1="0" y1="0" x2="0" y2="1"><stop offset="0" stopColor="#f8cf45" /><stop offset="1" stopColor="#ef7d1a" /></linearGradient></defs><path d="M15 1 A11 11 0 1 1 1 15 Q8 17 12 13 Q16 8 15 1 Z" fill="url(#moon)" /></svg>
          <span><span className="block">9°C</span><span className="block text-[#505a62]">Temps dégagé</span></span>
        </button>
        <div className="flex items-center pl-2.5">
          <button type="button" aria-label="Démarrer" className="mr-3.5"><svg width="24" height="24" viewBox="0 0 24 24"><defs><linearGradient id="win" x1="0" y1="0" x2="1" y2="1"><stop offset="0" stopColor="#4cc8f8" /><stop offset="1" stopColor="#0067c4" /></linearGradient></defs><path d="M0 0 H11.500 V11.500 H0 Z M12.500 0 H24 V11.500 H12.500 Z M0 12.500 H11.500 V24 H0 Z M12.500 12.500 H24 V24 H12.500 Z" fill="url(#win)" /></svg></button>
          <label className="flex h-8 w-[218px] items-center gap-2.5 rounded-full border border-[#c2d2e0] bg-[#f3f7fb] pl-2.5">
            <svg width="16" height="16" viewBox="0 0 16 16" fill="none" stroke="#222" strokeWidth="1.700"><circle cx="6.500" cy="6.500" r="5.500" /><path d="M10.500 10.500 L15 15" /></svg>
            <input type="text" aria-label="Rechercher" placeholder="Rechercher" className="w-40 bg-transparent text-[13px] outline-none placeholder:text-[#5b6268]" />
          </label>
          <div className="ml-[3px] flex">
            {apps.map((a) => (
              <button type="button" key={a.name} aria-label={a.name} className="relative flex h-[47px] w-11 items-center justify-center">
                {a.active && <span className="absolute inset-x-0.5 inset-y-1 rounded bg-[#eef4f9]" />}
                <svg width="26" height="26" viewBox="0 0 26 26" className="relative">{a.art}</svg>
                {a.dot && <span className="absolute bottom-1 h-[3px] w-1.5 rounded-full bg-[#7c8790]" />}
                {a.active && <span className="absolute bottom-1 h-[3px] w-4 rounded-full bg-[#0a78d4]" />}
              </button>
            ))}
          </div>
        </div>
        <div className="flex items-center justify-end pr-[19px] text-xs leading-4">
          <button type="button" aria-label="Icônes cachées" className="mr-[18px]"><svg width="12" height="8" viewBox="0 0 12 8" fill="none" stroke="#222" strokeWidth="1.400"><path d="M1 7 L6 1.500 L11 7" /></svg></button>
          <button type="button" aria-label="OneDrive" className="mr-[18px]"><svg width="18" height="15" viewBox="0 0 18 15" fill="#c9c9c9" stroke="#333"><path d="M5 13 Q1 13 1 9 Q1 6 4 5 Q6 1 10 2 Q13 2 14 5 Q17 6 17 9 Q17 13 13 13 Z" /><path d="M2 1 L16 14" /></svg></button>
          <button type="button" className="mr-[18px]">FRA</button>
          <button type="button" aria-label="Réseau" className="mr-1.5"><svg width="18" height="17" viewBox="0 0 18 17" fill="none" stroke="#222" strokeWidth="1.200"><path d="M11 1.500 H3 Q1.500 1.500 1.500 3 V11 Q1.500 12.500 3 12.500 H14 V6 M5 16 H12 M7 12.500 V16 M10 12.500 V16 M12.500 1 H16.500 V6 H12.500 Z M14.500 6 V16" /></svg></button>
          <button type="button" aria-label="Volume" className="mr-[14px]"><svg width="18" height="14" viewBox="0 0 18 14" fill="none" stroke="#222" strokeWidth="1.100"><path d="M1 5 H4 L8 1.500 V12.500 L4 9 H1 Z M10.500 5 Q12 7 10.500 9 M12.500 3 Q15.500 7 12.500 11 M14.500 1 Q19 7 14.500 13" /></svg></button>
          <button type="button" className="text-right"><span className="block">20:21</span><span className="block">15/03/2026</span></button>
        </div>
      </footer>
    </div>
  );
}
